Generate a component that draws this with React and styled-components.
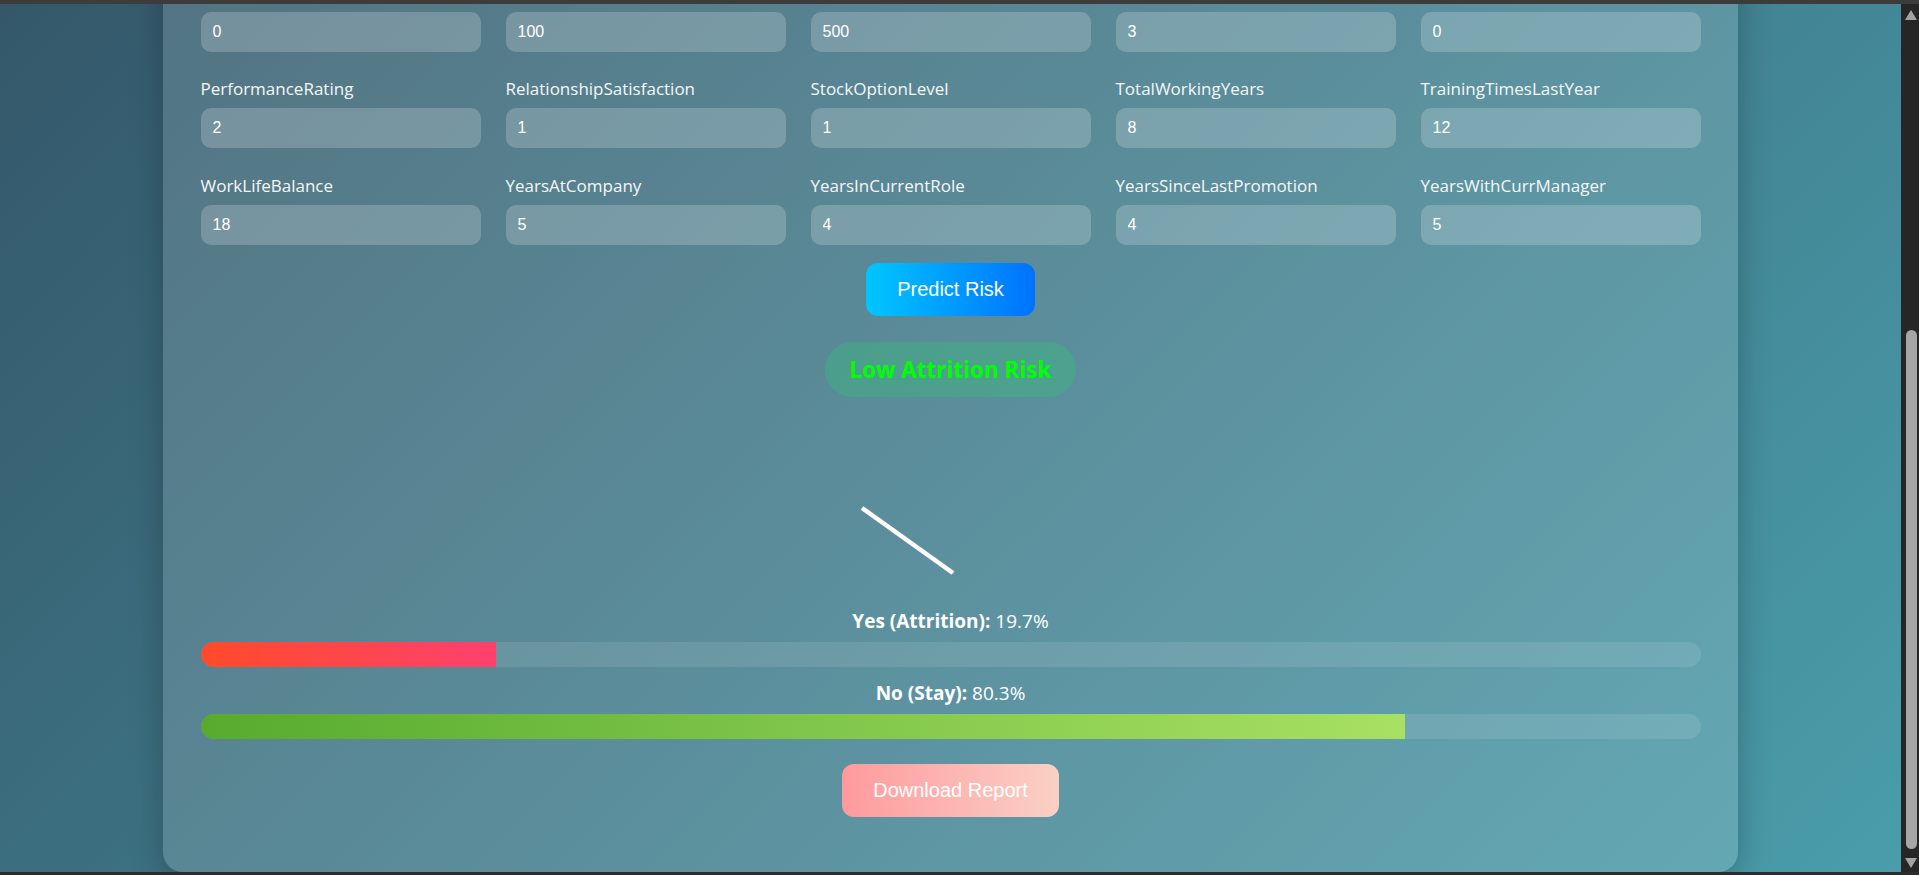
import React from 'react';
import styled, { createGlobalStyle } from 'styled-components';

const GlobalStyle = createGlobalStyle`
  html, body { margin: 0; padding: 0; height: 100%; overflow: hidden; }
  body { font-family: "Open Sans", "Noto Sans", sans-serif; background: #2f2f2f; }
  * { box-sizing: border-box; }
`;

// the form is scrolled: only the inputs of this first row still show
const fields = [
  [['NumCompaniesWorked', 0], ['MonthlyRate', 100], ['PercentSalaryHike', 500], ['Education', 3], ['OverTime', 0]],
  [['PerformanceRating', 2], ['RelationshipSatisfaction', 1], ['StockOptionLevel', 1], ['TotalWorkingYears', 8], ['TrainingTimesLastYear', 12]],
  [['WorkLifeBalance', 18], ['YearsAtCompany', 5], ['YearsInCurrentRole', 4], ['YearsSinceLastPromotion', 4], ['YearsWithCurrManager', 5]],
];

const probs = [
  { label: 'Yes (Attrition):', value: 19.7, fill: 'linear-gradient(to right, #ff4b2b, #ff416c)' },
  { label: 'No (Stay):', value: 80.3, fill: 'linear-gradient(to right, #56ab2f, #a8e063)' },
];

export default function App() {
  return (
    <>
      <GlobalStyle />
      <Frame>
        <TopEdge />
        <Middle>
          <Viewport>
            <Card>
              <FieldGrid>
                {fields.flat().map(([name, val], i) => (
                  <Field key={name + i}>
                    <Label>{name}</Label>
                    <Input type="text" defaultValue={val} />
                  </Field>
                ))}
              </FieldGrid>

              <ActionButton $bg="linear-gradient(to right, #00c6ff, #0072ff)" $top="18.5px">
                Predict Risk
              </ActionButton>

              <RiskPill>Low Attrition Risk</RiskPill>

              <Gauge viewBox="0 0 400 213">
                <line x1="111" y1="111" x2="202" y2="176" stroke="#fff" strokeWidth="4.5" />
              </Gauge>

              <Probs>
                {probs.map(p => (
                  <ProbGroup key={p.label}>
                    <ProbLabel><strong>{p.label}</strong> {p.value}%</ProbLabel>
                    <Track>
                      <Fill $bg={p.fill} style={{ width: p.value + '%' }} />
                    </Track>
                  </ProbGroup>
                ))}
              </Probs>

              <ActionButton $bg="linear-gradient(to right, #ff9a9e, #fad0c4)" $top="25px">
                Download Report
              </ActionButton>
            </Card>
          </Viewport>
          <Scrollbar>
            <ArrowUp />
            <Thumb />
            <ArrowDown />
          </Scrollbar>
        </Middle>
        <BottomEdge />
      </Frame>
    </>
  );
}

const Frame = styled.div`
  height: 875px;
  display: flex;
  flex-direction: column;
  background: #2f2f2f;
`;

const TopEdge = styled.div`
  height: 4px;
  flex-shrink: 0;
  background: #3c3c3c;
`;

const BottomEdge = styled.div`
  height: 3px;
  flex-shrink: 0;
  background: #2c2c2c;
`;

const Middle = styled.div`
  flex: 1;
  min-height: 0;
  display: flex;
`;

const Viewport = styled.main`
  flex: 1;
  min-width: 0;
  overflow: hidden;
  display: flex;
  flex-direction: column;
  justify-content: flex-end;
  align-items: center;
  background: linear-gradient(135deg, #34586a, #4a9dab);
`;

const Card = styled.section`
  flex-shrink: 0;
  width: 1575px;
  padding: 40px 37.5px 55px;
  display: flex;
  flex-direction: column;
  align-items: center;
  background: rgba(255, 255, 255, 0.15);
  border-radius: 20px;
  box-shadow: 0 8px 32px rgba(0, 0, 0, 0.25);
  color: #fff;
`;

const FieldGrid = styled.div`
  align-self: stretch;
  display: grid;
  grid-template-columns: repeat(5, 280px);
  gap: 26.5px 25px;
`;

const Field = styled.div`
  display: flex;
  flex-direction: column;
`;

const Label = styled.label`
  font-size: 17px;
  line-height: 22px;
  margin-bottom: 8px;
  color: #f4f7f8;
  white-space: nowrap;
`;

const Input = styled.input`
  height: 40px;
  border: none;
  outline: none;
  border-radius: 10px;
  padding: 0 12px;
  background: rgba(255, 255, 255, 0.2);
  color: #fff;
  font: 16px "Liberation Sans", Arial, sans-serif;
`;

const ActionButton = styled.button`
  margin-top: ${p => p.$top};
  padding: 15px 31.5px;
  border: none;
  border-radius: 12px;
  background: ${p => p.$bg};
  color: #fff;
  font: 20px/23px "Liberation Sans", Arial, sans-serif;
  cursor: pointer;
`;

const RiskPill = styled.div`
  margin-top: 26px;
  padding: 12px 25px;
  border-radius: 30px;
  background: rgba(46, 204, 113, 0.3);
  color: #00ff00;
  font-size: 22.5px;
  line-height: 31px;
  font-weight: 700;
`;

const Gauge = styled.svg`
  display: block;
  width: 400px;
  height: 213px;
`;

const Probs = styled.div`
  align-self: stretch;
  display: flex;
  flex-direction: column;
  gap: 15px;
`;

const ProbGroup = styled.div`
  display: flex;
  flex-direction: column;
`;

const ProbLabel = styled.div`
  text-align: center;
  font-size: 19px;
  line-height: 22px;
  margin-bottom: 10px;
  strong { font-weight: 700; }
`;

const Track = styled.div`
  height: 25px;
  border-radius: 12.5px;
  overflow: hidden;
  background: rgba(255, 255, 255, 0.1);
`;

const Fill = styled.div`
  height: 100%;
  background: ${p => p.$bg};
`;

const Scrollbar = styled.div`
  width: 18px;
  flex-shrink: 0;
  display: flex;
  flex-direction: column;
  align-items: center;
  padding: 6px 0 4px 2px;
  background: #262626;
`;

const ArrowUp = styled.div`
  width: 0;
  height: 0;
  border-left: 6px solid transparent;
  border-right: 6px solid transparent;
  border-bottom: 10px solid #a3a3a3;
`;

const ArrowDown = styled.div`
  width: 0;
  height: 0;
  margin-top: 9px;
  border-left: 6px solid transparent;
  border-right: 6px solid transparent;
  border-top: 10px solid #a3a3a3;
`;

const Thumb = styled.div`
  margin-top: auto;
  width: 11px;
  height: 519px;
  border-radius: 6px;
  background: #a6a6a6;
`;
